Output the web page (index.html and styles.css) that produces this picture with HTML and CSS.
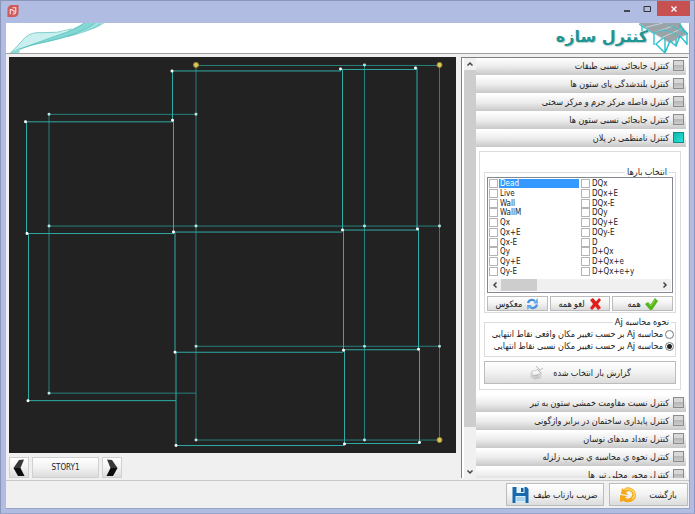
FILE: index.html
```html
<!DOCTYPE html>
<html lang="fa">
<head>
<meta charset="utf-8">
<title>کنترل سازه</title>
<link rel="stylesheet" href="styles.css">
</head>
<body>
<div class="window">
  <div class="titlebar">
    <svg class="app-icon" viewBox="0 0 13 13" aria-hidden="true">
      <path d="M5 0H12.500V8Q12 13 7.500 13H.5V5Q1 0 5 0Z" fill="#cf5a58"/>
      <path d="M3.500 10V5H6M6 3H9.500V7Q9.500 10 6 10M5.500 6H7.500V8.500" fill="none" stroke="#f8dfe4" stroke-width="1.200"/>
    </svg>
    <div class="controls">
      <button class="control" aria-label="Minimize"><svg viewBox="0 0 8 8"><path d="M1 6H7" stroke="#222" stroke-width="1.500"/></svg></button>
      <button class="control" aria-label="Maximize"><svg viewBox="0 0 8 8"><path d="M1 1.500H7.500V6.500H1Z" fill="none" stroke="#333"/></svg></button>
      <button class="control close" aria-label="Close"><svg viewBox="0 0 8 8"><path d="M1.500 1.500L6.500 6.500M6.500 1.500L1.500 6.500" stroke="#fff" stroke-width="1.300"/></svg></button>
    </div>
  </div>

  <div class="client">
    <header class="banner">
      <svg class="wave" viewBox="0 0 102 31" aria-hidden="true">
        <path d="M3 31Q10 24 16 17Q22 10 34 9.500Q48 10 58 9Q70 5 79 0H100Q92 6 78 9Q70 11 62 14Q44 19 28 22Q14 26 3 31Z" fill="#c9efee"/>
        <path d="M79 0H92Q84 6 74 10Q62 15 44 19Q24 23 9 28Q32 20 54 12Q68 7 79 0Z" fill="#83d8d5"/>
        <path d="M92 0H100Q92 6 78 9L70 11Q84 7 92 0Z" fill="#9fe2df"/>
        <path d="M3 31Q12 26 28 22Q56 16 72 10Q84 6 90 0M3 31Q30 20 54 12Q70 7 79 0M3 31Q12 22 18 15Q24 9 36 10Q52 11 66 6M62 14Q84 9 96 1" fill="none" stroke="#57bcb9" stroke-width=".7"/>
        <path d="M3 31L13 25L12 31Z" fill="#8edbd8"/>
      </svg>
      <div class="brand" dir="rtl">
        <h1>کنترل سازه</h1>
      </div>
      <svg class="frame-art" viewBox="0 0 50 31" aria-hidden="true">
        <path d="M0 0H41L49 11L41 14L31 20L14 10Z" fill="#9aa4a8"/>
        <path d="M0 1L14 10L31 20L49 11M4 5L24 0M14 10L34 3M22 15L44 5" fill="none" stroke="#c3d3d6"/>
        <path d="M0 1L14 10M14 10L26 7L41 13M30 2L49 11" fill="none" stroke="#4fbcc6" stroke-width="1.200"/>
        <path d="M3 3V8M15 10V22M26 15V30M37 16V23M48 11V22M26 30L17 21L24 15M26 30L31 18L37 23L41 13L48 21M41 0V4L49 11" fill="none" stroke="#2cc0cc" stroke-width="1.400"/>
      </svg>
    </header>

    <main class="workspace">
      <section class="plan-column">
        <svg class="plan" viewBox="9 57 447 397" preserveAspectRatio="none" role="img" aria-label="STORY1">
          <g class="grid-lines">
            <path d="M49 114V394M196 65V441M364.500 65V441M439.500 65V441"/>
            <path d="M196 65.500H439M49 114.500H196M49 226.500H439M196 347H439M49 394H196M196 441H439"/>
          </g>
          <g class="moved-lines">
            <path d="M26.500 122V234M28.500 234V401M172.500 71V121M173.500 121V233M175 233V353M176 353V447M342.500 69V231M343.500 231V351M344.500 351V445M417 68V230M418.500 230V350M419.500 350V444"/>
            <path d="M172 71H341M341 69.500H417M26 122H173M27 234H174M174 232.500H342M342 230.500H417M175 353H343M343 350.500H418M28 401.500H176M176 446.500H344M344 444.500H419"/>
          </g>
          <path class="grid-nodes" d="M49 114.500h0M196 114.500h0M49 226.500h0M196 226.500h0M364.500 226.500h0M439.500 226.500h0M364.500 65h0M196 347h0M364.500 347h0M439.500 347h0M49 394h0M196 441h0M364.500 441h0"/>
          <path class="moved-nodes" d="M25.500 122h0M27 234h0M28 401.500h0M172 71h0M172.500 120.500h0M173.500 232.500h0M175 353h0M176 446.500h0M340.500 69h0M342.500 230.500h0M343.500 351h0M344.500 445h0M415.500 68h0M417.500 229.500h0M418.500 350h0M419.500 443.500h0"/>
          <g class="key-nodes"><circle cx="196" cy="65" r="2.500"/><circle cx="439.500" cy="65" r="2.500"/><circle cx="439.500" cy="441" r="2.500"/></g>
        </svg>
        <nav class="stories">
          <button class="btn arrow" aria-label="Previous"><svg viewBox="0 0 12 18"><path d="M11 0.500L6 1L0.500 9H7.500Z" fill="#383838"/><path d="M0.500 9H7.500L11.500 17H5Z" fill="#0c0c0c"/></svg></button>
          <button class="btn story">STORY1</button>
          <button class="btn arrow" aria-label="Next"><svg viewBox="0 0 12 18"><path d="M1 0.500L6 1L11.500 9H4.500Z" fill="#383838"/><path d="M11.500 9H4.500L0.500 17H7Z" fill="#0c0c0c"/></svg></button>
        </nav>
      </section>

      <aside class="side">
        <div class="vbar" aria-hidden="true">
          <svg viewBox="0 0 12 12"><path d="M3.500 7.500L6 5L8.500 7.500"/></svg>
          <span class="vthumb"></span>
          <svg viewBox="0 0 12 12"><path d="M3.500 4.500L6 7L8.500 4.500"/></svg>
        </div>
        <div class="checks" dir="rtl">
          <button class="check"><i class="lamp"></i>کنترل جابجائی نسبی طبقات</button>
          <button class="check"><i class="lamp"></i>کنترل بلندشدگی پای ستون ها</button>
          <button class="check"><i class="lamp"></i>کنترل فاصله مرکز جرم و مرکز سختی</button>
          <button class="check"><i class="lamp"></i>کنترل جابجائی نسبی ستون ها</button>
          <button class="check"><i class="lamp on"></i>کنترل نامنظمی در پلان</button>
          <div class="detail">
            <div class="card">
              <fieldset class="group loads">
                <legend>انتخاب بارها</legend>
                <div class="list" dir="ltr">
                  <div class="rows">
                    <label class="load selected"><input type="checkbox"><span>Dead</span></label>
                    <label class="load"><input type="checkbox"><span>Live</span></label>
                    <label class="load"><input type="checkbox"><span>Wall</span></label>
                    <label class="load"><input type="checkbox"><span>WallM</span></label>
                    <label class="load"><input type="checkbox"><span>Qx</span></label>
                    <label class="load"><input type="checkbox"><span>Qx+E</span></label>
                    <label class="load"><input type="checkbox"><span>Qx-E</span></label>
                    <label class="load"><input type="checkbox"><span>Qy</span></label>
                    <label class="load"><input type="checkbox"><span>Qy+E</span></label>
                    <label class="load"><input type="checkbox"><span>Qy-E</span></label>
                    <label class="load"><input type="checkbox"><span>DQx</span></label>
                    <label class="load"><input type="checkbox"><span>DQx+E</span></label>
                    <label class="load"><input type="checkbox"><span>DQx-E</span></label>
                    <label class="load"><input type="checkbox"><span>DQy</span></label>
                    <label class="load"><input type="checkbox"><span>DQy+E</span></label>
                    <label class="load"><input type="checkbox"><span>DQy-E</span></label>
                    <label class="load"><input type="checkbox"><span>D</span></label>
                    <label class="load"><input type="checkbox"><span>D+Qx</span></label>
                    <label class="load"><input type="checkbox"><span>D+Qx+e</span></label>
                    <label class="load"><input type="checkbox"><span>D+Qx+e+y</span></label>
                  </div>
                  <div class="hbar" aria-hidden="true">
                    <svg viewBox="0 0 12 12"><path d="M7.500 3.500L5 6L7.500 8.500"/></svg>
                    <span class="hthumb"></span>
                    <svg viewBox="0 0 12 12"><path d="M4.500 3.500L7 6L4.500 8.500"/></svg>
                  </div>
                </div>
                <div class="actions">
                  <button class="btn"><svg viewBox="0 0 13 12"><path d="M0 6L3 4L5.500 6.500L10 0L13 3L7 12H5Z" fill="#55b51e"/><path d="M3 4.500L6 8L10 2" fill="none" stroke="#8bd84a"/></svg>همه</button>
                  <button class="btn"><svg viewBox="0 0 13 12"><path d="M1 2L4 0L7 3.500L10 0L12 2L9 6L12 10L9 12L6.500 8.500L3 12L1 10L4 6Z" fill="#e0201b"/></svg>لغو همه</button>
                  <button class="btn"><svg viewBox="0 0 13 12"><path d="M2 5Q3 1.500 7 2L9 3M11 6.500Q10 10.500 6 10L4 9" fill="none" stroke="#4793dc" stroke-width="2.200"/><path d="M7.500 5.500L12 5.500L11.500 0ZM5.500 7L1 7L1.500 12Z" fill="#5fa8ea"/></svg>معکوس</button>
                </div>
              </fieldset>
              <fieldset class="group method">
                <legend>نحوه محاسبه <bdi>Aj</bdi></legend>
                <label class="choice"><input type="radio" name="aj"><span>محاسبه Aj بر حسب تغییر مکان واقعی نقاط انتهایی</span></label>
                <label class="choice"><input type="radio" name="aj" checked><span>محاسبه Aj بر حسب تغییر مکان نسبی نقاط انتهایی</span></label>
              </fieldset>
              <button class="btn report">گزارش بار انتخاب شده<svg viewBox="0 0 16 16"><path d="M2 6L9 4L13 8L12 14L5 15L1 12Z" fill="#d4d4d4"/><path d="M3 7L9 5L11 8L5 10Z" fill="#f4f4f4"/><path d="M7 1L11 5L14 3M8 4L12 8M3 11L10 10M5 13L10 12" fill="none" stroke="#bababa"/></svg></button>
            </div>
          </div>
          <button class="check"><i class="lamp"></i>کنترل نسبت مقاومت خمشی ستون به تیر</button>
          <button class="check"><i class="lamp"></i>کنترل پایداری ساختمان در برابر واژگونی</button>
          <button class="check"><i class="lamp"></i>کنترل تعداد مدهای نوسان</button>
          <button class="check"><i class="lamp"></i>کنترل نحوه ي محاسبه ي ضریب زلزله</button>
          <button class="check"><i class="lamp"></i>کنترل محور محلی تیر ها</button>
        </div>
      </aside>
    </main>

    <footer class="footer">
      <button class="btn" dir="rtl">ضریب بازتاب طیف<svg viewBox="0 0 16 16"><path d="M0 0H14L16 2V16H0Z" fill="#1768ad"/><path d="M4 0H12V6H4Z" fill="#e6f2fa"/><path d="M8.500 1H11V5H8.500Z" fill="#1b5f9e"/><path d="M3 9H13V16H3Z" fill="#d6eaf6"/><path d="M4 11H12M4 13H12" stroke="#79b7dc"/></svg></button>
      <button class="btn" dir="rtl">بازگشت<svg viewBox="0 0 17 16"><path d="M5 1Q10 -1 14 3Q18 9 14 13Q9 17 3 14L0 15V8L7 9L5 11Q10 13 12 9Q13 5 9 4L6 5L8 8L1 7L2 1L4 3Z" fill="#f3a719"/><path d="M5 2.500Q10 1 13 4Q16 9 12 12" fill="none" stroke="#ffda62" stroke-width="1.500"/></svg></button>
    </footer>
  </div>
</div>
</body>
</html>
```

FILE: styles.css
```css
* { box-sizing: border-box; }

body {
  margin: 0;
  font: 9px/10px "Noto Sans", "DejaVu Sans Condensed", "DejaVu Sans", sans-serif;
  color: #222;
}

button {
  font: inherit;
  color: inherit;
  padding: 0;
  margin: 0;
}

svg { display: block; flex: none; }

.window {
  display: flex;
  flex-direction: column;
  height: 100vh;
  padding: 0 4px 4px 5px;
  background: #b1bce3;
  border: 1px solid #8b96bb;
  border-bottom-color: #9aa5cc;
}

/* Title bar */
.titlebar {
  display: flex;
  justify-content: space-between;
  flex: none;
  height: 22px;
}

.app-icon { width: 12px; height: 12px; margin: 4px 1px; }

.controls { display: flex; height: 15px; }

.control {
  display: flex;
  align-items: center;
  justify-content: center;
  width: 20px;
  border: 0;
  background: none;
}

.control svg { width: 8px; height: 8px; }
.close { width: 33px; background: #c75050; }

/* Client area */
.client {
  display: flex;
  flex-direction: column;
  flex: 1;
  min-height: 0;
  background: #f0f0f0;
  border: 1px solid #98a3c8;
  border-width: 0 1px 1px 0;
}

.banner {
  display: flex;
  align-items: flex-start;
  flex: none;
  height: 31px;
  background: #fff;
  border-bottom: 1px solid #a0a0a0;
}

.wave { width: 102px; height: 30px; }

.brand { margin-left: auto; }

.brand h1 {
  margin: 0;
  font: bold 16px/28px "DejaVu Sans", sans-serif;
  color: #1f9593;
  text-shadow: 1px 1px 1px #b5cccc;
}

.frame-art { width: 50px; height: 31px; margin-left: -9px; }

.workspace {
  display: flex;
  flex: 1;
  min-height: 0;
  gap: 5px;
  padding: 3px 1px 2px 3px;
  border-bottom: 1px solid #c8c8c8;
}

.plan-column {
  display: flex;
  flex-direction: column;
  flex: 1;
  min-width: 0;
}

.plan {
  flex: 1;
  width: 100%;
  min-height: 0;
  background: #222;
}

.grid-lines path { fill: none; stroke: #26817b; }
.moved-lines path { fill: none; stroke: #2eaca6; }
.grid-nodes, .moved-nodes { fill: none; stroke: #b9e6e2; stroke-width: 3; stroke-linecap: round; }
.moved-nodes { stroke: #fff; }
.key-nodes { fill: #dcc95e; stroke: #a58a2c; }

.stories { display: flex; flex: none; gap: 3px; padding-top: 4px; }

.btn {
  display: flex;
  align-items: center;
  justify-content: center;
  gap: 4px;
  height: 15px;
  border: 1px solid #bcbcbc;
  background: linear-gradient(#fff, #f2f2f2 50%, #dcdcdc);
}

.btn svg { width: 13px; height: 12px; }
.stories .btn { height: 21px; border-color: #d0d0d0; }
.stories .arrow { width: 20px; }
.stories .arrow svg { width: 12px; height: 18px; }
.stories .story { width: 67px; font: 8px/10px "DejaVu Sans Condensed", "DejaVu Sans", sans-serif; }

/* Side panel */
.side {
  display: flex;
  flex: none;
  width: 227px;
  padding: 0 2px;
  background: #fff;
  border: 1px solid #808080;
  border-width: 1px 0 0 1px;
}

.vbar {
  display: flex;
  flex-direction: column;
  align-items: center;
  flex: none;
  width: 12px;
  background: #f0f0f0;
}

.vbar svg, .hbar svg { width: 12px; height: 12px; fill: none; stroke: #444; stroke-width: 1.500; }
.vthumb { flex: none; width: 100%; height: 85%; background: #cdcdcd; }
.vbar svg:last-child { margin-top: auto; }

.checks { flex: 1; min-width: 0; overflow: hidden; }

.check {
  display: flex;
  align-items: center;
  gap: 4px;
  width: 100%;
  height: 17px;
  margin-bottom: 1px;
  padding: 0 2px 2px;
  border: 0;
  background: linear-gradient(#fff, #ececec 50%, #c8c8c8);
}

.lamp {
  width: 11px;
  height: 11px;
  border: 1px solid #8c8c8c;
  background: linear-gradient(#d8d8d8 50%, #b8b8b8 50%, #ccc);
}

.lamp.on { border-color: #148c85; background: linear-gradient(135deg, #08b8ae, #2ce4d6); }

.detail { padding: 3px 5px 5px 3px; }

.card {
  display: flex;
  flex-direction: column;
  gap: 4px;
  padding: 15px 4px 5px;
  border: 1px solid #dcdcdc;
}

.group {
  min-width: 0;
  margin: 0;
  padding: 0 2px;
  border: 1px solid #dcdcdc;
}

.group legend { margin-right: 4px; padding: 0 2px; }

.list { padding: 1px; border: 1px solid #828790; }

.rows {
  display: grid;
  grid-auto-flow: column;
  grid-template-rows: repeat(10, 1fr);
  grid-template-columns: 1fr 1fr;
  column-gap: 2px;
  height: 97px;
  font: 8px/9px "DejaVu Sans Condensed", "DejaVu Sans", sans-serif;
}

.load { display: flex; align-items: center; gap: 1px; min-height: 0; }
.load span { flex: 1; padding-left: 1px; }
.selected span { background: #3399ff; color: #fff; }

.load input {
  appearance: none;
  width: 9px;
  height: 9px;
  margin: 0;
  border: 1px solid #b4b4b4;
  background: #fff;
}

.hbar { display: flex; margin-top: 3px; background: #f0f0f0; }
.hthumb { width: 36px; background: #cdcdcd; }
.hbar svg:last-child { margin-left: auto; }

.actions {
  display: grid;
  grid-template-columns: repeat(3, 1fr);
  gap: 2px;
  padding: 3px 0 1px;
}

.method { padding: 1px 0 4px; }
.choice { display: flex; align-items: center; gap: 2px; height: 12px; padding: 0 1px; white-space: nowrap; }

.choice input {
  appearance: none;
  width: 9px;
  height: 9px;
  margin: 0;
  border: 1px solid #777;
  border-radius: 50%;
  background: #fff;
}

.choice input:checked { background: radial-gradient(circle, #222 2px, #fff 3px); }

.report { gap: 8px; height: 23px; }
.report svg { width: 16px; height: 16px; }

/* Footer */
.footer {
  display: flex;
  justify-content: flex-end;
  gap: 5px;
  flex: none;
  padding: 2px 1px 2px 2px;
}

.footer .btn { gap: 4px; width: 98px; height: 23px; }
.footer .btn:last-child { gap: 12px; width: 79px; }
.footer svg { width: 17px; height: 16px; }
```
